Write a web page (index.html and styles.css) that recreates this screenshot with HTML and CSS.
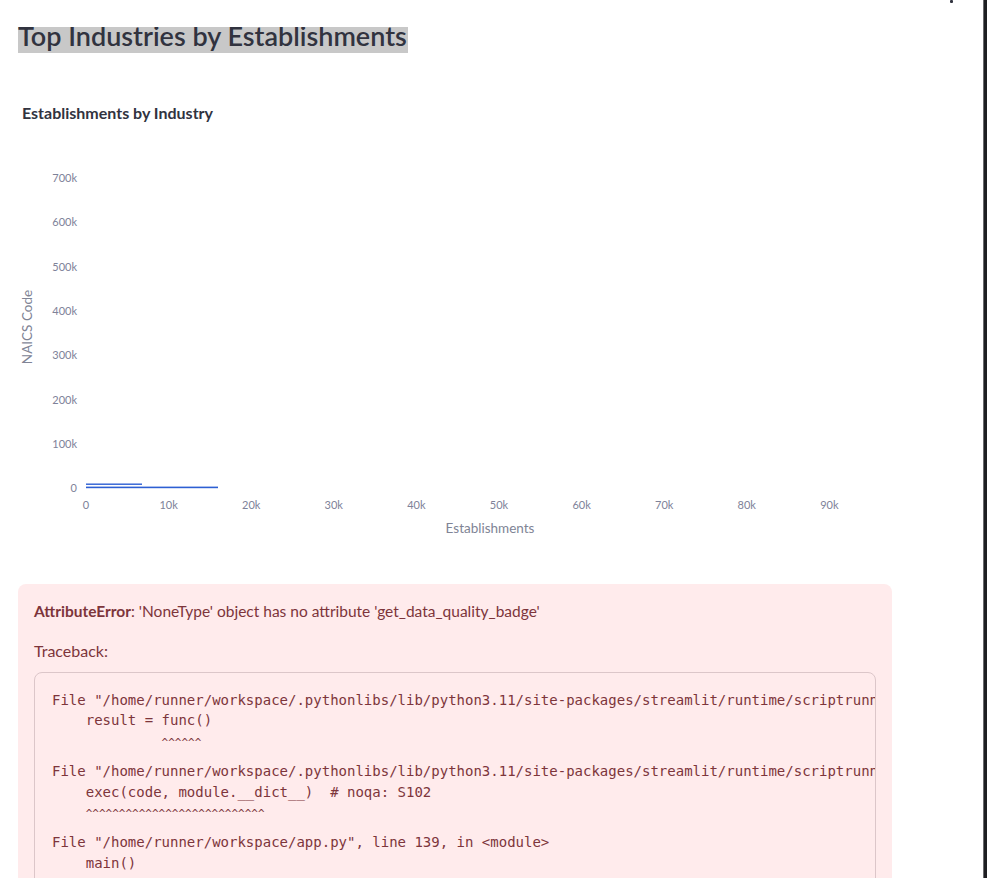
FILE: index.html
```html
<!DOCTYPE html>
<html lang="en">
<head>
<meta charset="utf-8">
<title>Top Industries by Establishments</title>
<link rel="stylesheet" href="styles.css">
</head>
<body>
<div class="page">
  <div class="main">
    <div class="topbar"><span class="menu-dot"></span></div>

    <h1 class="title"><span class="title-text">Top Industries by Establishments</span></h1>

    <section class="chart">
      <div class="chart-title">Establishments by Industry</div>
      <svg class="chart-svg" width="874" height="440" viewBox="0 0 874 440" xmlns="http://www.w3.org/2000/svg">
        <g class="ylabels" text-anchor="end">
          <text x="59" y="59">700k</text>
          <text x="59" y="103">600k</text>
          <text x="59" y="148">500k</text>
          <text x="59" y="192">400k</text>
          <text x="59" y="236">300k</text>
          <text x="59" y="281">200k</text>
          <text x="59" y="325">100k</text>
          <text x="59" y="369">0</text>
        </g>
        <g class="xlabels" text-anchor="middle">
          <text x="68" y="386">0</text>
          <text x="150.6" y="386">10k</text>
          <text x="233.2" y="386">20k</text>
          <text x="315.8" y="386">30k</text>
          <text x="398.4" y="386">40k</text>
          <text x="481" y="386">50k</text>
          <text x="563.6" y="386">60k</text>
          <text x="646.2" y="386">70k</text>
          <text x="728.8" y="386">80k</text>
          <text x="811.4" y="386">90k</text>
        </g>
        <text class="axis-title" x="472" y="410" text-anchor="middle">Establishments</text>
        <text class="axis-title" x="0" y="0" text-anchor="middle" transform="translate(14 204) rotate(-90)">NAICS Code</text>
        <rect class="bar" x="68" y="360.5" width="56" height="1.4"></rect>
        <rect class="bar" x="68" y="363.6" width="132" height="1.6"></rect>
      </svg>
    </section>

    <section class="error">
      <div class="error-msg"><strong>AttributeError</strong>: 'NoneType' object has no attribute 'get_data_quality_badge'</div>
      <div class="error-tb">Traceback:</div>
      <div class="code">
        <div class="frame">File "/home/runner/workspace/.pythonlibs/lib/python3.11/site-packages/streamlit/runtime/scriptrunner/exec_code.py", line 121, in exec_func_with_error_handling
    result = func()
             <span class="caret">^^^^^^</span></div>
        <div class="frame">File "/home/runner/workspace/.pythonlibs/lib/python3.11/site-packages/streamlit/runtime/scriptrunner/script_runner.py", line 591, in code_to_exec
    exec(code, module.__dict__)  # noqa: S102
    <span class="caret">^^^^^^^^^^^^^^^^^^^^^^^^^^^</span></div>
        <div class="frame">File "/home/runner/workspace/app.py", line 139, in &lt;module&gt;
    main()
    <span class="caret">^^^^^^</span></div>
        <div class="frame">File "/home/runner/workspace/app.py", line 120, in main
    show_top_industries(data)</div>
      </div>
    </section>
  </div>
  <div class="edge"></div>
</div>
</body>
</html>
```

FILE: styles.css
```css
html, body {
  margin: 0;
  padding: 0;
  height: 100%;
  overflow: hidden;
  background: #ffffff;
}

body {
  font-family: "Lato", "Noto Sans", sans-serif;
  color: #31333f;
}

.page {
  display: flex;
  height: 100%;
}

.main {
  flex: 1;
  position: relative;
  padding: 19px 91px 0 18px;
  overflow: hidden;
}

.topbar {
  position: absolute;
  top: 0;
  left: 0;
  right: 0;
  height: 27px;
  background: #ffffff;
  z-index: 2;
}

.menu-dot {
  position: absolute;
  left: 950px;
  top: 0;
  width: 3px;
  height: 3px;
  border-radius: 1px;
  background: #31333f;
}

.edge {
  width: 4px;
  background: #1e1f22;
  border-left: 1px solid #6b6b6e;
  box-sizing: border-box;
}

.title {
  margin: 0;
  font-size: 27px;
  font-weight: 600;
  line-height: 34px;
  height: 34px;
}

.title-text {
  display: inline-block;
  background: #c8c8c8;
  height: 34px;
  padding-right: 1px;
  color: #31333f;
}

.chart {
  margin-top: 50px;
}

.chart-title {
  padding-left: 4px;
  font-size: 16px;
  font-weight: 700;
  line-height: 20px;
  color: #31333f;
}

.chart-svg {
  display: block;
  font-family: "Lato", "Noto Sans", sans-serif;
}

.ylabels text,
.xlabels text {
  font-size: 11px;
  fill: #7e8299;
}

.axis-title {
  font-size: 13.5px;
  fill: #808495;
}

.bar {
  fill: #2d5fd3;
}

.error {
  margin-top: 21px;
  background: #ffebec;
  border-radius: 8px;
  padding: 16px 16px 40px 16px;
  color: #7d353b;
}

.error-msg {
  font-size: 15.5px;
  line-height: 22px;
}

.error-msg strong {
  font-weight: 700;
}

.error-tb {
  margin-top: 18px;
  font-size: 16px;
  line-height: 22px;
}

.code {
  margin-top: 10px;
  border: 1px solid #dcc6c9;
  border-radius: 8px;
  padding: 17px 17px;
  overflow: hidden;
  font-family: "DejaVu Sans Mono", "Liberation Mono", monospace;
  font-size: 14px;
  color: #7d353b;
}

.frame {
  white-space: pre;
  line-height: 20.4px;
  margin-bottom: 10px;
}

.caret {
  font-size: 11px;
  line-height: 0;
}
```
